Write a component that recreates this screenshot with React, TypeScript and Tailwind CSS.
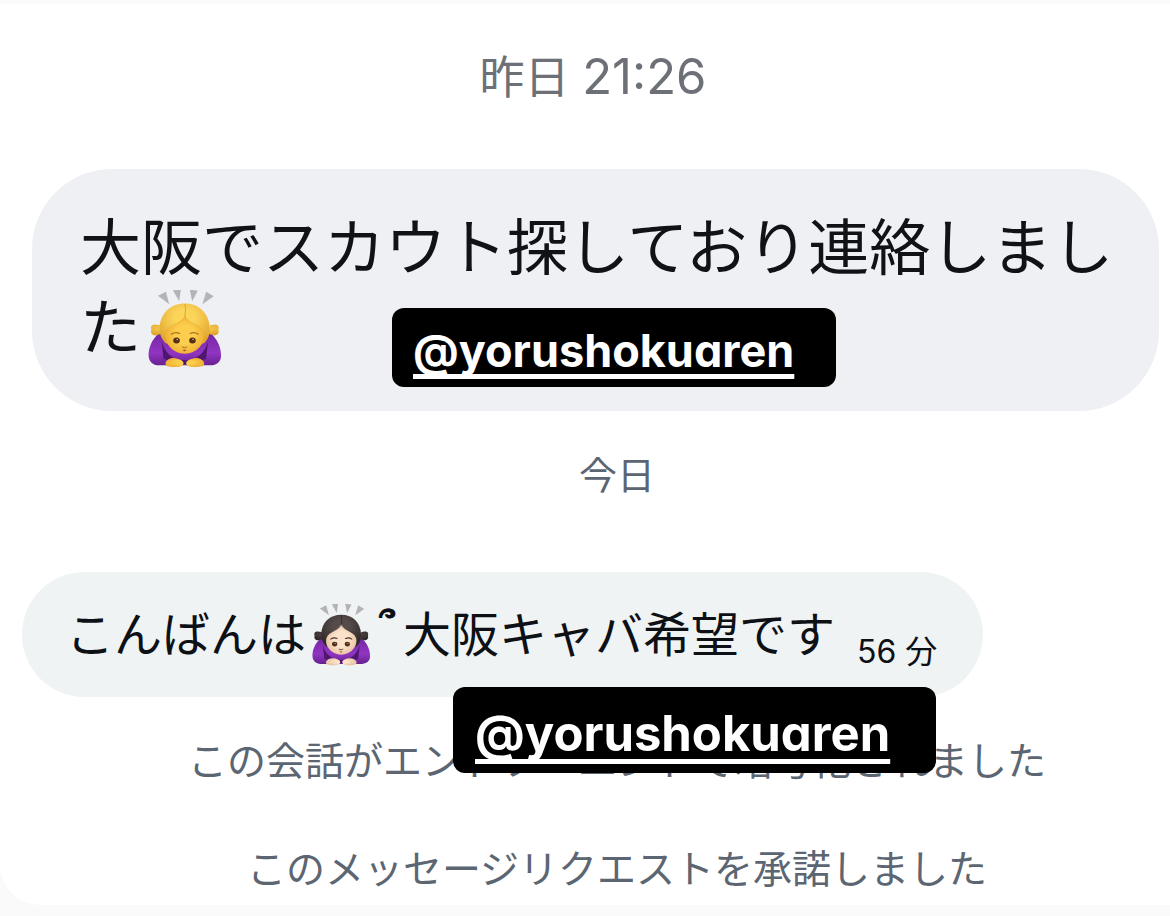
import type { ReactNode } from 'react';

type BowingProps = {
  hair: string;
  hairDark: string;
  skin: string;
  skinDark: string;
  brow: string;
  id: string;
  className: string;
};

const Bowing = ({ hair, hairDark, skin, skinDark, brow, id, className }: BowingProps) => (
  <svg viewBox="50 30 226 235" className={className} role="img" aria-label="おじぎ">
    <defs>
      <radialGradient id={`${id}-hair`} cx="0.5" cy="0.35" r="0.7">
        <stop offset="0.3" stopColor={hair} />
        <stop offset="1" stopColor={hairDark} />
      </radialGradient>
      <radialGradient id={`${id}-skin`} cx="0.5" cy="0.5" r="0.6">
        <stop offset="0.4" stopColor={skin} />
        <stop offset="1" stopColor={skinDark} />
      </radialGradient>
      <linearGradient id={`${id}-shirt`} x1="0" y1="0" x2="0" y2="1">
        <stop offset="0" stopColor="#7426a3" />
        <stop offset="0.6" stopColor="#9135c2" />
        <stop offset="1" stopColor="#66218f" />
      </linearGradient>
    </defs>
    <g fill="#b4b4b6">
      <path d="M83 47l24-12 10 38z" />
      <path d="M128 31l24-2-5 35z" />
      <path d="M179 29l24 3-17 32z" />
      <path d="M228 35l23 14-34 24z" />
    </g>
    <path d="M84 162c-18 16-31 44-29 68 2 18 14 26 30 27h156c18-1 31-9 32-27 2-24-12-52-29-68z" fill={`url(#${id}-shirt)`} />
    <path d="M94 186c12 40 40 56 70 56s58-16 70-56l-6 52-64 16-64-16z" fill="#4e176f" />
    <path d="M74 134c-12 0-14 9-11 16-4 10 4 18 14 17l17-5-4-26zM254 134c12 0 14 9 11 16 4 10-4 18-14 17l-15-5 4-26z" fill={`url(#${id}-hair)`} />
    <path d="M164 71c-44 0-74 30-76 72-1 22 7 36 19 48h114c13-12 19-26 18-48-3-42-31-72-75-72z" fill={`url(#${id}-hair)`} />
    <path d="M164 106c-9 26-48 28-56 52-9 34 22 64 56 64s65-30 56-64c-8-24-47-26-56-52z" fill={`url(#${id}-skin)`} />
    <path d="M164 72c3 14 2 26 0 38" fill="none" stroke={hairDark} strokeWidth="3" />
    <path d="M164 110c-12 24-48 22-56 48M164 110c12 24 48 22 56 48" fill="none" stroke={hairDark} strokeWidth="2" opacity="0.6" />
    <path d="M124 163q12-8 24-2M180 161q13-6 24 2" fill="none" stroke={brow} strokeWidth="4" strokeLinecap="round" />
    <ellipse cx="139" cy="182" rx="10" ry="9" fill="#563015" />
    <ellipse cx="187" cy="182" rx="10" ry="9" fill="#563015" />
    <circle cx="141" cy="179" r="2" fill="#e9d9c8" />
    <circle cx="189" cy="179" r="2" fill="#e9d9c8" />
    <path d="M156 202q7 4 14 0" fill="none" stroke={brow} strokeWidth="3" strokeLinecap="round" />
    <path d="M157 211q6-4 12 0l-6 4z" fill="#b8503f" />
    <path d="M106 250c4-12 20-18 36-13 10 3 18 7 18 13 0 10-12 13-27 12-17 0-29-2-27-12zM222 250c-4-12-20-18-36-13-10 3-18 7-18 13 0 10 12 13 27 12 17 0 29-2 27-12z" fill={`url(#${id}-skin)`} />
    <path d="M119 252l7-7M131 255l7-8M197 247l7 8M209 245l7 7" stroke={skinDark} strokeWidth="2" />
  </svg>
);

const Notice = ({ children }: { children: ReactNode }) => (
  <p className="pl-16 text-center text-[39px] leading-[56px] text-[#5b6672]">{children}</p>
);

const App = () => {
  return (
    <div className="min-h-screen bg-[#fafafa] pt-1 pb-2 font-['Inter','Noto_Sans_CJK_JP',sans-serif]">
      <main className="rounded-bl-[40px] bg-white pt-[41px] pb-2">
        <p className="pl-4 text-center text-[45px] leading-[64px] text-[#6e7078]">
          昨日 <time className="text-[49px]">21:26</time>
        </p>

        <div className="relative mt-[59px] mr-[11px] ml-8 rounded-[80px] bg-[#eff0f4] pt-[39px] pr-9 pb-[43px] pl-12">
          <p className="text-[61px] leading-[80px] text-[#101218]">
            大阪でスカウト探しており連絡しました
            <Bowing
              id="blond"
              hair="#fbd45a"
              hairDark="#dfa32b"
              skin="#fdce4d"
              skinDark="#eaa82c"
              brow="#a9731b"
              className="mt-[2px] ml-[6px] inline-block h-[78px] w-[75px] align-top"
            />
          </p>
          <a
            href="#yorushokuaren"
            className="absolute top-[139px] left-[360px] rounded-xl bg-black pt-[11px] pr-[42px] pb-1 pl-[21px] text-[45px] leading-[64px] font-bold text-white underline decoration-[5px] underline-offset-[7px] [font-feature-settings:'cv11'] [text-decoration-skip-ink:none]"
          >
            @yorushokuaren
          </a>
        </div>

        <p className="mt-9 pl-16 text-center text-[38px] leading-[56px] text-[#5b6672]">今日</p>

        <div className="relative mt-[69px] ml-[22px] flex w-fit items-center rounded-full bg-[#eff3f4] py-[30px] pr-[46px] pl-11 text-[48px] leading-[65px] whitespace-nowrap text-[#0d1014]">
          <p className="flex items-center">
            こんばんは
            <Bowing
              id="dark"
              hair="#544b4a"
              hairDark="#2c2525"
              skin="#fbe3cb"
              skinDark="#e3b998"
              brow="#4a342a"
              className="ml-[5px] h-[62px] w-[60px]"
            />
            <span className="w-8 self-start text-center font-['DejaVu_Sans'] text-[36px] leading-[52px] font-bold">՞</span>
            大阪キャバ希望です
          </p>
          <time className="ml-[22px] self-end text-[32px] leading-[30px]">56 分</time>
          <a
            href="#yorushokuaren"
            className="absolute top-[115px] left-[431px] rounded-xl bg-black pt-[13px] pr-[46px] pb-[5px] pl-[22px] text-[49px] leading-[68px] font-bold text-white underline decoration-[5px] underline-offset-[8px] [font-feature-settings:'cv11'] [text-decoration-skip-ink:none]"
          >
            @yorushokuaren
          </a>
        </div>

        <div className="mt-9 flex flex-col gap-[52px]">
          <Notice>この会話がエンドツーエンドで暗号化されました</Notice>
          <Notice>このメッセージリクエストを承諾しました</Notice>
        </div>
      </main>
    </div>
  );
};

export default App;
